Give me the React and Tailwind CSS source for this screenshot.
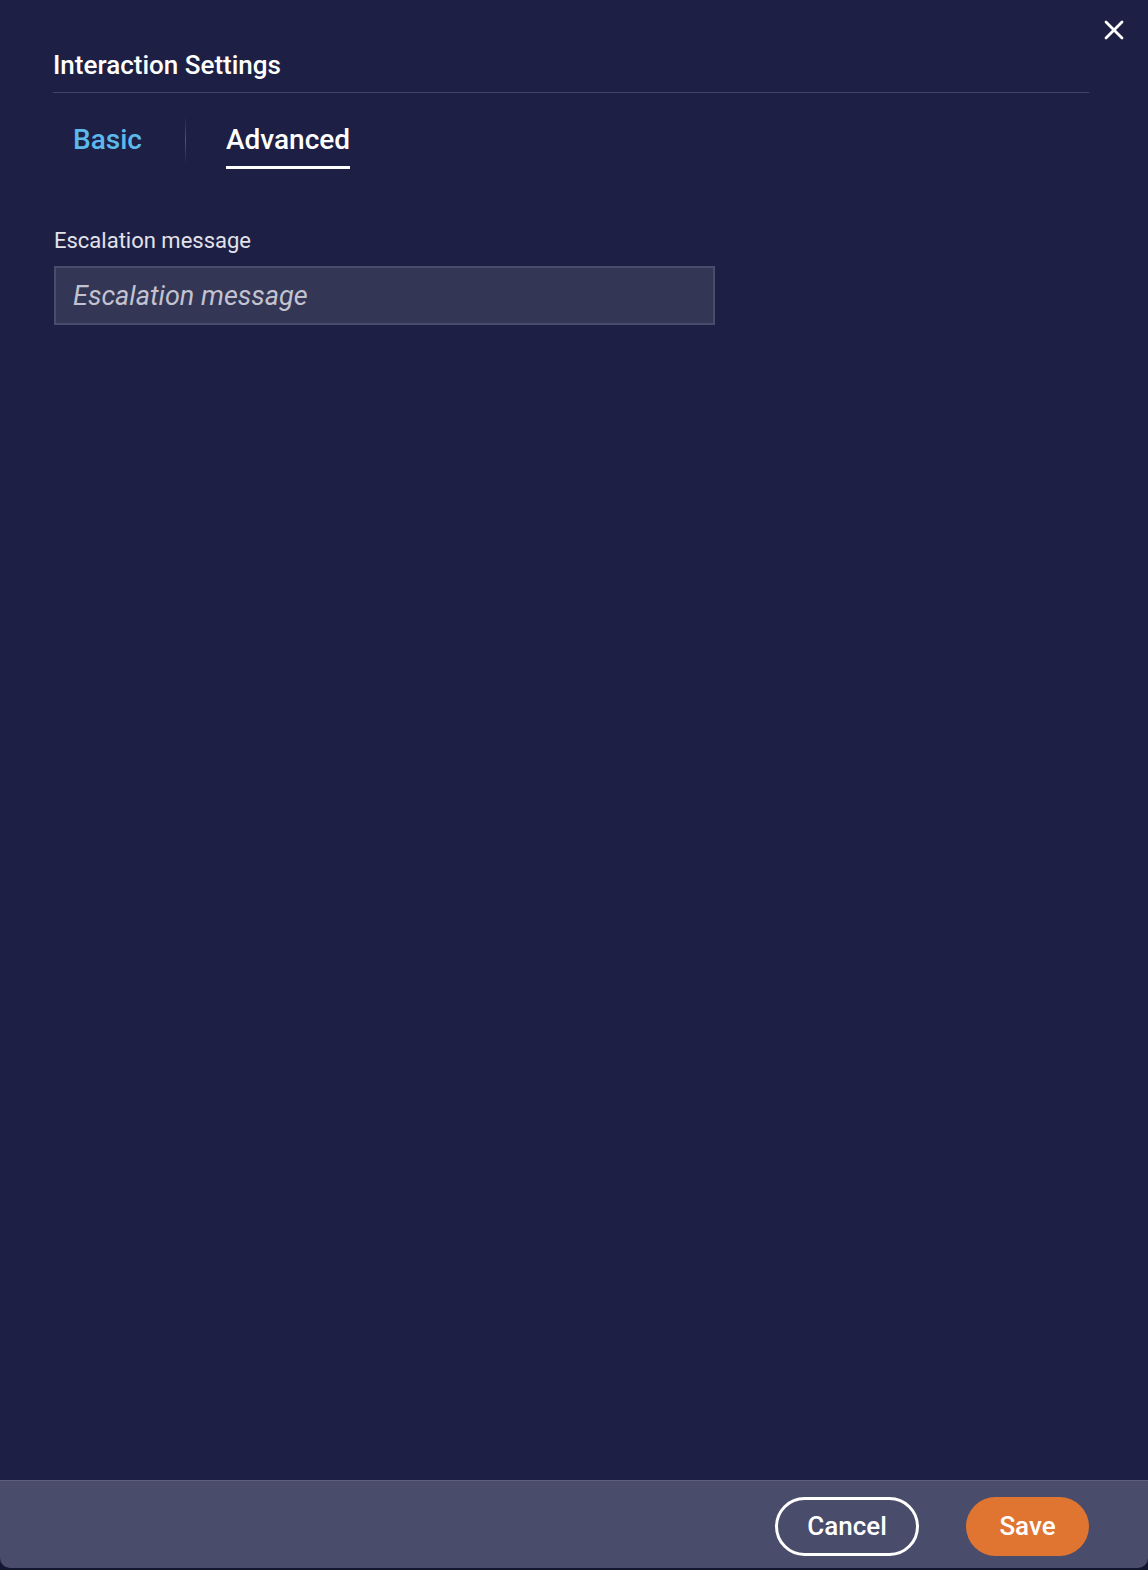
import { X } from 'lucide-react';

export default function App() {
    return (
        <div className="w-[1148px] h-[1570px] bg-[#15162f] font-['Roboto',sans-serif]">
            <div className="h-[1568px] flex flex-col bg-[#1e1f45] rounded-b-[10px] overflow-hidden relative">
                <button className="absolute right-[18px] top-[14px] text-white">
                    <X size={32} strokeWidth={2.1} />
                </button>
                <div className="flex-1 pl-[54px] pr-[59px] pt-[50px]">
                    <h2 className="text-[26px] leading-[30px] font-medium text-white pb-[12px] border-b border-[#40426a] -ml-px">Interaction Settings</h2>
                    <div className="flex items-stretch mt-[23px]">
                        <button className="pl-[19px] pr-[43px] text-[28px] font-medium text-[#5bb9eb] leading-[48px] h-[48px]">Basic</button>
                        <div className="w-px h-[48px] bg-gradient-to-b from-transparent via-[#50527a] to-transparent"></div>
                        <div className="ml-[40px] flex flex-col">
                            <div className="text-[28px] font-medium text-white leading-[48px] h-[48px]">Advanced</div>
                            <div className="h-[3px] mt-[2px] bg-white"></div>
                        </div>
                    </div>
                    <label className="block mt-[60px] text-[22px] leading-[24px] text-[#e2e2ea]">Escalation message</label>
                    <input
                        placeholder="Escalation message"
                        className="mt-[13px] w-[661px] h-[59px] bg-[#343656] border-2 border-[#4a4c6e] px-[17px] text-[27px] italic text-white placeholder:text-[#c2c2d0] outline-none"
                    />
                </div>
                <div className="h-[88px] bg-[#4a4c6b] border-t border-[#5d5f7d] flex items-center justify-end gap-[47px] pr-[59px] pt-[3px]">
                    <button className="w-[144px] h-[59px] rounded-full border-[3px] border-white text-white text-[26px] font-medium">Cancel</button>
                    <button className="w-[123px] h-[59px] rounded-full bg-[#df7531] text-white text-[26px] font-medium">Save</button>
                </div>
            </div>
        </div>
    );
}
